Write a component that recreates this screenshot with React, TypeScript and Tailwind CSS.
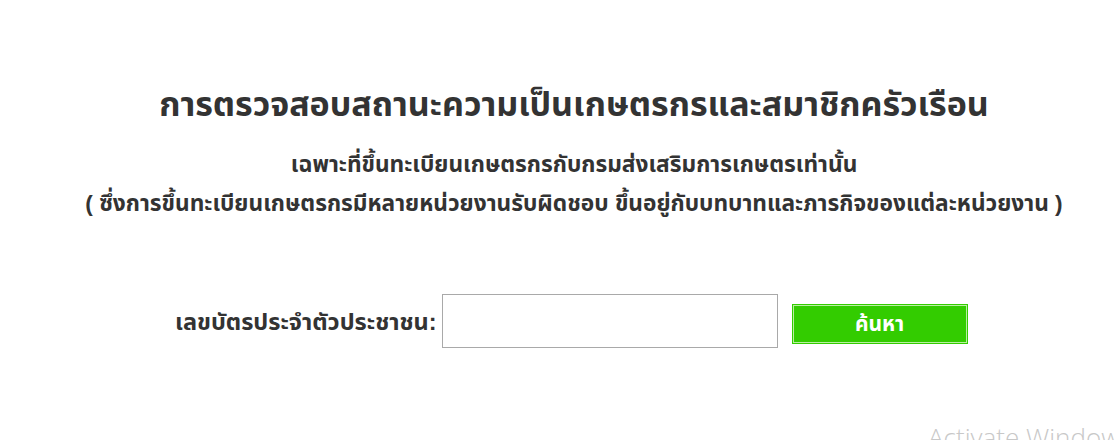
export default function App() {
  return (
    <div
      className="relative w-[1116px] h-[440px] overflow-hidden bg-white text-[#333333]"
      style={{ fontFamily: '"Liberation Sans", "Noto Sans Thai", "Noto Sans", sans-serif' }}
    >
      <div className="flex flex-col items-center pl-[32px] pt-[81px]">
        <h1 className="text-[34px] font-bold leading-[46px] whitespace-nowrap">
          การตรวจสอบสถานะความเป็นเกษตรกรและสมาชิกครัวเรือน
        </h1>
        <p className="mt-[20px] text-[22.7px] font-bold leading-[34px] whitespace-nowrap">
          เฉพาะที่ขึ้นทะเบียนเกษตรกรกับกรมส่งเสริมการเกษตรเท่านั้น
        </p>
        <p className="mt-[5px] text-[22.7px] font-bold leading-[34px] whitespace-nowrap">
          ( ซึ่งการขึ้นทะเบียนเกษตรกรมีหลายหน่วยงานรับผิดชอบ ขึ้นอยู่กับบทบาทและภารกิจของแต่ละหน่วยงาน )
        </p>
      </div>
      <div className="mt-[74px] flex items-start pl-[175px]">
        <label className="mt-[11px] text-[23.5px] font-bold whitespace-nowrap">เลขบัตรประจำตัวประชาชน:</label>
        <input
          type="text"
          className="ml-[5px] h-[54px] w-[336px] border border-[#a9a9a9] bg-white outline-none"
        />
        <button className="ml-[14px] mt-[10px] h-[40px] w-[176px] border border-[#33cc00] bg-[#33cc00] text-[21px] font-bold text-white shadow-[inset_0_0_0_1px_#b8f0a0]">
          ค้นหา
        </button>
      </div>
      <div
        className="absolute left-[928px] top-[418px] text-[26px] font-light text-[#c8c8c8] whitespace-nowrap"
        style={{ fontFamily: '"Open Sans", sans-serif' }}
      >
        Activate Windows
      </div>
    </div>
  )
}
